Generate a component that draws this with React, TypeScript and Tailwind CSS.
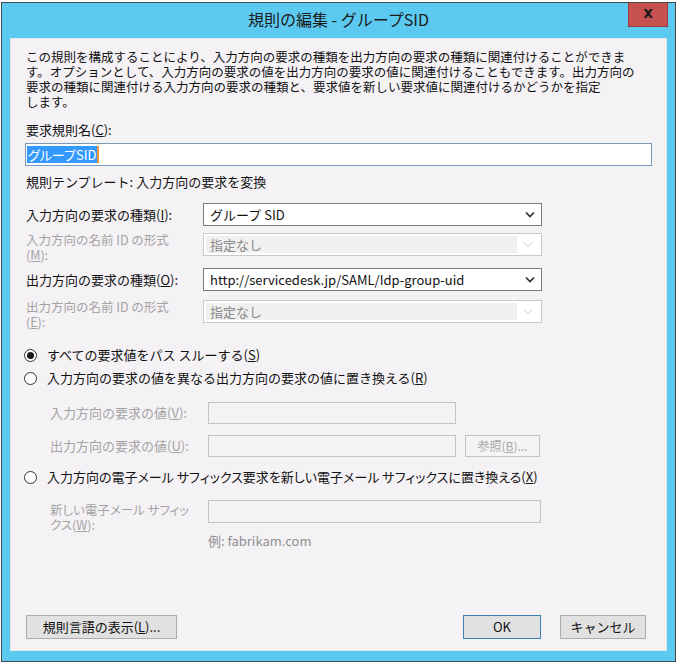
import React from 'react';

const Chevron: React.FC<{ disabled?: boolean }> = ({ disabled }) => (
  <svg width="10" height="7" viewBox="0 0 10 7" className="shrink-0">
    <path
      d="M1 1.5 L5 5.5 L9 1.5"
      fill="none"
      stroke={disabled ? '#c4c4c4' : '#2b2b2b'}
      strokeWidth={disabled ? 1 : 1.6}
    />
  </svg>
);

const Combo: React.FC<{ value: string; disabled?: boolean }> = ({ value, disabled }) =>
  disabled ? (
    <div className="w-[339px] h-[23px] border border-[#c9c9c9] bg-white flex items-stretch p-[2px]">
      <div className="flex-1 bg-[#f0f0f0] flex items-center pl-[4px] text-[#8a8a8a]">{value}</div>
      <div className="w-[22px] flex items-center justify-center">
        <Chevron disabled />
      </div>
    </div>
  ) : (
    <div className="w-[339px] h-[23px] border border-[#7a7a7a] bg-white flex items-center pl-[6px] pr-[6px]">
      <span className="flex-1 whitespace-nowrap">{value}</span>
      <Chevron />
    </div>
  );

const Radio: React.FC<{ checked?: boolean }> = ({ checked }) => (
  <span className="w-[13px] h-[13px] rounded-full border border-[#333] bg-white flex items-center justify-center shrink-0">
    {checked && <span className="w-[7px] h-[7px] rounded-full bg-[#1a1a1a]" />}
  </span>
);

const App: React.FC = () => {
  return (
    <div className="w-[677px] h-[667px] bg-white pt-[2px] pl-[1px] overflow-hidden font-['Noto_Sans_CJK_JP','Noto_Sans',sans-serif] text-[13px] text-[#111]">
      <div className="w-[675px] h-[660px] border border-[#4a4a4a] bg-[#5ccaf0] flex flex-col px-[8px] pb-[10px]">
        {/* title bar */}
        <div className="relative h-[35px] flex items-center justify-center">
          <span className="text-[16px] text-[#1b1b1b] leading-none -mt-[4px]">規則の編集 - グループSID</span>
          <div className="absolute top-0 right-[-1px] w-[40px] h-[24px] bg-[#c75050] border border-[#9a3d3d] border-t-0 flex items-center justify-center">
            <span className="font-['DejaVu_Sans',sans-serif] font-bold text-[15px] leading-none text-[#1a1a1a] -mt-[3px]">x</span>
          </div>
        </div>

        {/* body */}
        <div className="flex-1 bg-[#f5f2f6] border border-[#e4e4e4] flex flex-col pl-[15px] pr-[20px] pt-[10px] pb-[11px]">
          <div className="text-[12.5px] leading-[15px] whitespace-nowrap">
            <div>この規則を構成することにより、入力方向の要求の種類を出力方向の要求の種類に関連付けることができま</div>
            <div>す。オプションとして、入力方向の要求の値を出力方向の要求の値に関連付けることもできます。出力方向の</div>
            <div>要求の種類に関連付ける入力方向の要求の種類と、要求値を新しい要求値に関連付けるかどうかを指定</div>
            <div>します。</div>
          </div>

          <div className="mt-[13px] leading-[15px]">
            要求規則名(<u>C</u>):
          </div>
          <div className="mt-[6px] -ml-[1px] w-[627px] h-[23px] border border-[#7b98bd] bg-white flex items-center pl-[1px]">
            <span className="bg-[#3399ff] text-white leading-[17px] px-[1px] [font-feature-settings:'palt']">グループSID</span>
            <span className="w-[2px] h-[17px] bg-[#f0963c]" />
          </div>

          <div className="mt-[8px] leading-[15px]">規則テンプレート: 入力方向の要求を変換</div>

          <div className="mt-[14px] flex items-center h-[23px]">
            <div className="w-[177px] whitespace-nowrap">
              入力方向の要求の種類(<u>I</u>):
            </div>
            <Combo value="グループ SID" />
          </div>
          <div className="mt-[7px] flex items-start h-[23px]">
            <div className="w-[177px] h-[23px] -mt-[1px] text-[12.5px] leading-[15px] text-[#a3a3a3] whitespace-nowrap">
              入力方向の名前 ID の形式
              <br />
              (<u>M</u>):
            </div>
            <Combo value="指定なし" disabled />
          </div>
          <div className="mt-[12px] flex items-center h-[23px]">
            <div className="w-[177px] whitespace-nowrap">
              出力方向の要求の種類(<u>O</u>):
            </div>
            <Combo value="http://servicedesk.jp/SAML/Idp-group-uid" />
          </div>
          <div className="mt-[9px] flex items-start h-[23px]">
            <div className="w-[177px] h-[23px] -mt-[1px] text-[12.5px] leading-[15px] text-[#a3a3a3] whitespace-nowrap">
              出力方向の名前 ID の形式
              <br />
              (<u>E</u>):
            </div>
            <Combo value="指定なし" disabled />
          </div>

          <div className="mt-[24px] h-[16px] flex items-center gap-[10px] -ml-[2px] whitespace-nowrap">
            <Radio checked />
            <span>すべての要求値をパス スルーする(<u>S</u>)</span>
          </div>
          <div className="mt-[7px] h-[16px] flex items-center gap-[10px] -ml-[2px] whitespace-nowrap">
            <Radio />
            <span>入力方向の要求の値を異なる出力方向の要求の値に置き換える(<u>R</u>)</span>
          </div>

          <div className="mt-[16px] flex items-center h-[22px] text-[#a3a3a3]">
            <div className="w-[182px] pl-[24px] whitespace-nowrap">
              入力方向の要求の値(<u>V</u>):
            </div>
            <div className="w-[248px] h-[22px] border border-[#c4c4c4]" />
          </div>
          <div className="mt-[11px] flex items-center h-[22px] text-[#a3a3a3]">
            <div className="w-[182px] pl-[24px] whitespace-nowrap">
              出力方向の要求の値(<u>U</u>):
            </div>
            <div className="w-[248px] h-[22px] border border-[#c4c4c4]" />
            <div className="ml-[9px] w-[75px] h-[22px] border border-[#c4c4c4] bg-[#f4f4f4] flex items-center justify-center text-[12px] text-[#a8a8a8]">
              参照(<u>B</u>)...
            </div>
          </div>

          <div className="mt-[12px] h-[16px] flex items-center gap-[10px] -ml-[2px] whitespace-nowrap">
            <Radio />
            <span className="[font-feature-settings:'palt']">
              入力方向の電子メール サフィックス要求を新しい電子メール サフィックスに置き換える(<u>X</u>)
            </span>
          </div>

          <div className="mt-[15px] flex items-start h-[23px] text-[#a3a3a3]">
            <div className="w-[182px] pl-[24px] text-[12.5px] leading-[15px] pt-[2px] whitespace-nowrap [font-feature-settings:'palt']">
              新しい電子メール サフィッ
              <br />
              クス(<u>W</u>):
            </div>
            <div className="w-[333px] h-[23px] border border-[#c4c4c4]" />
          </div>
          <div className="mt-[10px] leading-[15px] pl-[182px] text-[#8f8f8f]">例: fabrikam.com</div>

          <div className="mt-auto flex items-center">
            <button className="w-[151px] h-[24px] border border-[#acacac] bg-[#e1e1e1] flex items-center justify-center">
              規則言語の表示(<u>L</u>)...
            </button>
            <div className="flex-1" />
            <button className="w-[78px] h-[24px] border border-[#3c7fb1] bg-[#e1e1e1] flex items-center justify-center">
              OK
            </button>
            <button className="ml-[19px] w-[86px] h-[24px] border border-[#acacac] bg-[#e1e1e1] flex items-center justify-center">
              キャンセル
            </button>
          </div>
        </div>
      </div>
    </div>
  );
};

export default App;
